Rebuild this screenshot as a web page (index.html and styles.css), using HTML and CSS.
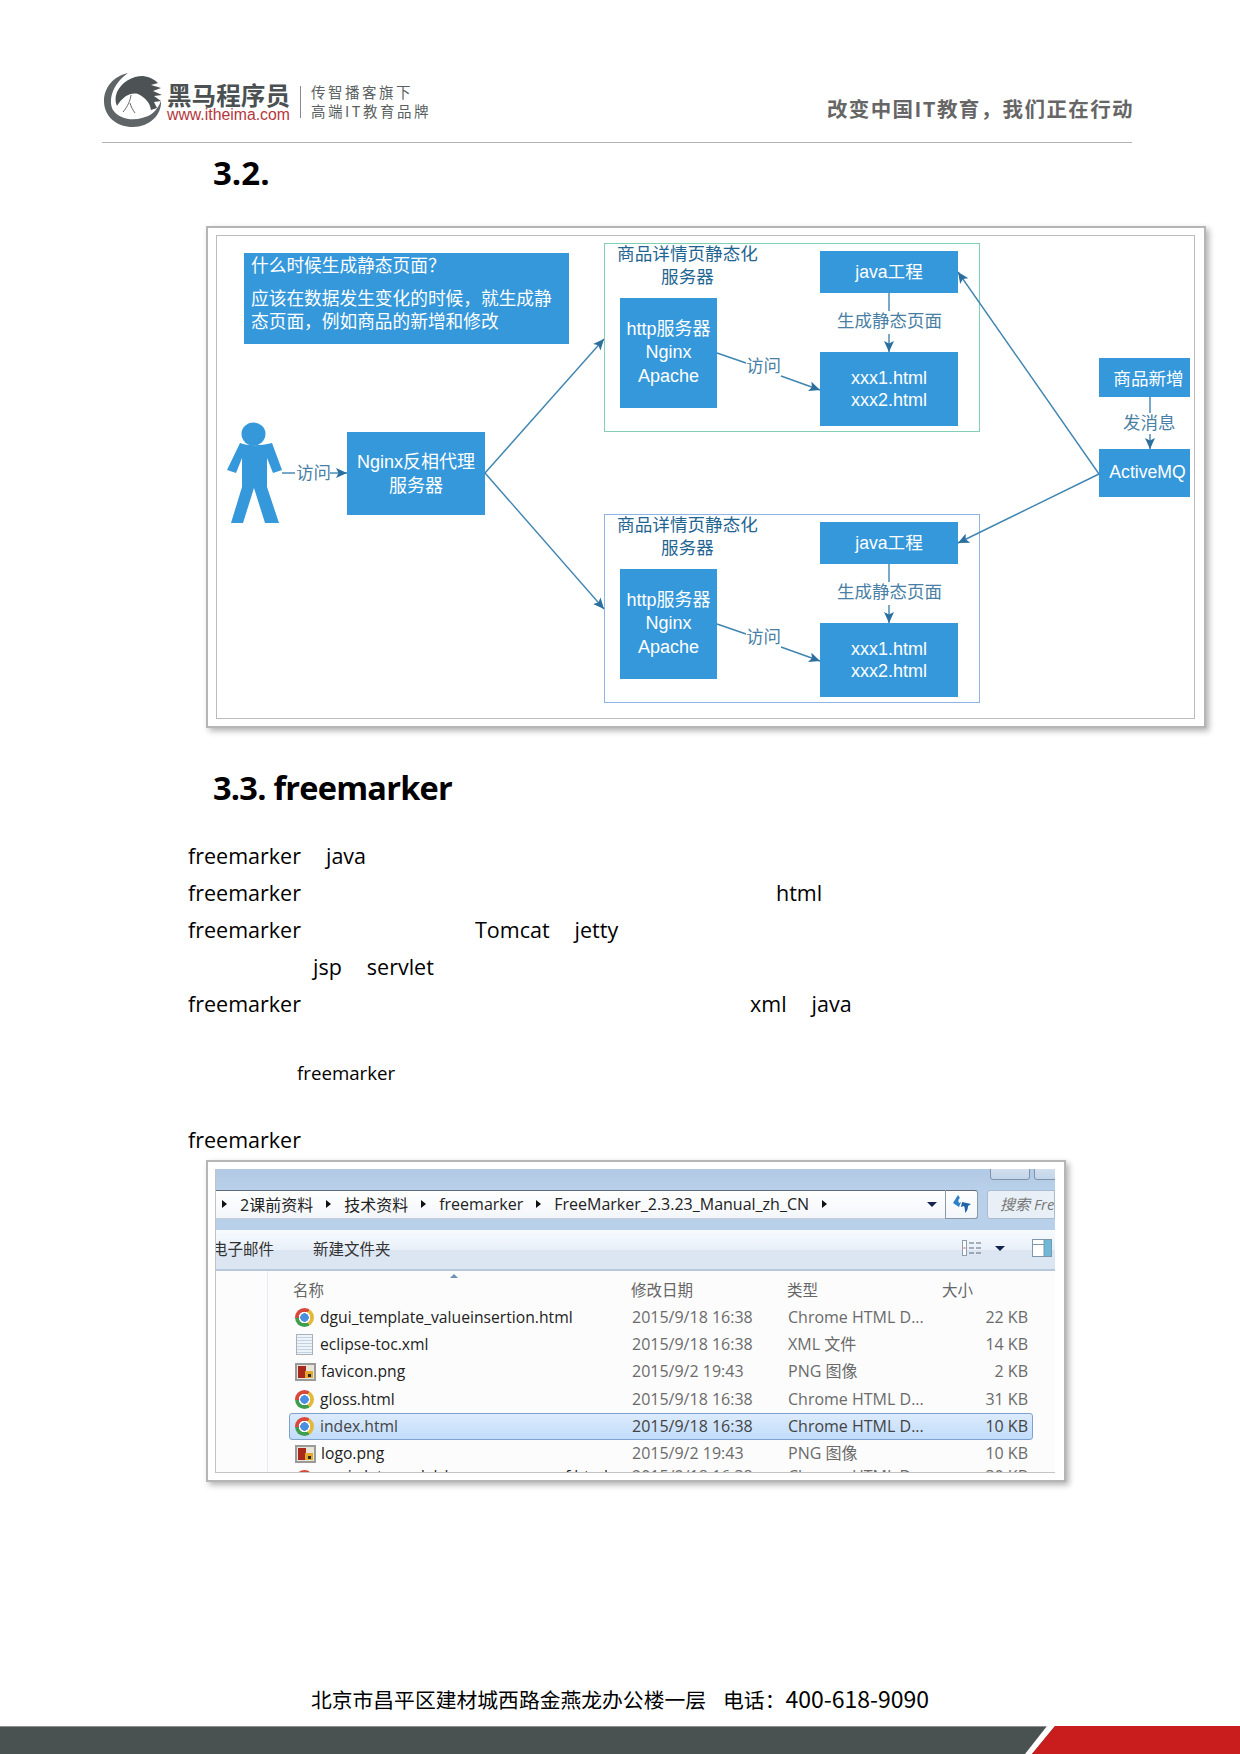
FILE: index.html
```html
<!DOCTYPE html>
<html lang="zh-CN">
<head>
    <meta charset="UTF-8">
    <title>freemarker</title>
    <link rel="stylesheet" href="styles.css">
</head>
<body>
    <header class="page-head">
        <svg class="logo" width="60" height="56" viewBox="0 0 60 56">
            <path fill="#5f6566" d="M24 0C10 3 0 14 0 28C0 44 13 54 29 54C45 54 58 42 57 28C53 38 47 43 38 45C28 48 15 46 9 37C4 28 8 11 24 0Z"/>
            <path fill="#4d5354" d="M13 19C18 9 28 3 39 3C46 4 51 7 54 10L47 12L57 15L49 18L58 22L50 23L57 28L50 29L53 35L47 37C46 30 42 25 34 21C27 19 19 23 13 33C11 29 11 24 13 19Z"/>
            <path fill="none" stroke="#666" stroke-width="1" d="M27 22C26 28 24 33 19 39M26 30C27 34 29 37 31 40"/>
        </svg>
        <div class="brand">
            <div class="brand-name">黑马程序员</div>
            <div class="brand-url">www.itheima.com</div>
        </div>
        <div class="brand-rule"></div>
        <div class="brand-slogan">
            <div>传智播客旗下</div>
            <div>高端IT教育品牌</div>
        </div>
        <div class="head-motto">改变中国IT教育，我们正在行动</div>
    </header>

    <main>
        <h2 class="heading first">3.2.</h2>

        <div class="shot diagram">
            <div class="canvas">
                <div class="box note">
                    <p>什么时候生成静态页面？</p>
                    <p>应该在数据发生变化的时候，就生成静<br>态页面，例如商品的新增和修改</p>
                </div>
                <div class="box node nginx">Nginx反相代理<br>服务器</div>

                <div class="group group-green">
                    <div class="group-title">商品详情页静态化<br>服务器</div>
                    <div class="box node http">http服务器<br>Nginx<br>Apache</div>
                    <div class="box node java">java工程</div>
                    <div class="box node xxx">xxx1.html<br>xxx2.html</div>
                    <div class="edge-label gen">生成静态页面</div>
                    <div class="edge-label visit">访问</div>
                    <svg class="group-lines" width="376" height="189" viewBox="604 243 376 189">
                        <path class="line" d="M717 353L746 363"/>
                        <path class="line" marker-end="url(#arrow)" d="M781 376L820 390"/>
                        <path class="line" d="M889 293V311"/>
                        <path class="line" marker-end="url(#arrow)" d="M889 334V352"/>
                    </svg>
                </div>

                <div class="group group-blue">
                    <div class="group-title">商品详情页静态化<br>服务器</div>
                    <div class="box node http">http服务器<br>Nginx<br>Apache</div>
                    <div class="box node java">java工程</div>
                    <div class="box node xxx">xxx1.html<br>xxx2.html</div>
                    <div class="edge-label gen">生成静态页面</div>
                    <div class="edge-label visit">访问</div>
                    <svg class="group-lines" width="376" height="189" viewBox="604 243 376 189">
                        <path class="line" d="M717 353L746 363"/>
                        <path class="line" marker-end="url(#arrow)" d="M781 376L820 390"/>
                        <path class="line" d="M889 293V311"/>
                        <path class="line" marker-end="url(#arrow)" d="M889 334V352"/>
                    </svg>
                </div>

                <div class="box node goods">商品新增</div>
                <div class="box node mq">ActiveMQ</div>
                <div class="edge-label send">发消息</div>
                <div class="edge-label visit-out">访问</div>

                <svg class="main-lines" width="977" height="481" viewBox="217 236 977 481">
                    <defs>
                        <marker id="arrow" markerUnits="userSpaceOnUse" markerWidth="12" markerHeight="10" refX="11" refY="5" orient="auto">
                            <path d="M0 0L11 5L0 10L2.5 5Z" fill="#2a6f9e"/>
                        </marker>
                    </defs>
                    <ellipse cx="253.5" cy="434" rx="12" ry="11.5" fill="#3598db"/>
                    <path fill="#3598db" d="M240 443C248 446 260 446 272 443L282 470L273 473L267 458V487L279 523H265L254 488L243 523H231L242 487V458L236 473L227 470Z"/>
                    <path class="line" d="M282 473H295"/>
                    <path class="line" marker-end="url(#arrow)" d="M330 473H347"/>
                    <path class="line" marker-end="url(#arrow)" d="M485 473L604 339"/>
                    <path class="line" marker-end="url(#arrow)" d="M485 473L604 609"/>
                    <path class="line" marker-end="url(#arrow)" d="M1099 474L958 272"/>
                    <path class="line" marker-end="url(#arrow)" d="M1099 474L958 543"/>
                    <path class="line" d="M1150 397V413"/>
                    <path class="line" marker-end="url(#arrow)" d="M1150 434V449"/>
                </svg>
            </div>
        </div>

        <h2 class="heading second">3.3. freemarker</h2>

        <div class="doc-text">
            <div class="doc-row"><span>freemarker</span><span class="to-java">java</span></div>
            <div class="doc-row"><span>freemarker</span><span class="to-html">html</span></div>
            <div class="doc-row"><span>freemarker</span><span class="to-tomcat">Tomcat</span><span class="to-jetty">jetty</span></div>
            <div class="doc-row"><span class="to-jsp">jsp</span><span class="to-servlet">servlet</span></div>
            <div class="doc-row"><span>freemarker</span><span class="to-xml">xml</span><span class="to-java2">java</span></div>
            <div class="doc-row small"><span class="to-small">freemarker</span></div>
            <div class="doc-row last"><span>freemarker</span></div>
        </div>

        <div class="shot explorer">
            <div class="window">
                <div class="win-top">
                    <span class="win-btn btn-max"></span>
                    <span class="win-btn btn-close"></span>
                </div>
                <div class="win-address">
                    <div class="crumbs">
                        <i class="tri"></i><span>2课前资料</span>
                        <i class="tri"></i><span>技术资料</span>
                        <i class="tri"></i><span>freemarker</span>
                        <i class="tri"></i><span>FreeMarker_2.3.23_Manual_zh_CN</span>
                        <i class="tri"></i>
                        <i class="drop"></i>
                    </div>
                    <div class="refresh">
                        <svg width="20" height="20" viewBox="0 0 20 20">
                            <path fill="#2f7fc8" d="M1 9L6 1L8 4C6 5 6 7 7 9L9 8L7 13Z"/>
                            <path fill="#1f63a8" d="M10 8L19 10L16 12C16 15 15 17 13 19C13 16 13 14 12 12L9 13Z"/>
                        </svg>
                    </div>
                    <div class="search">搜索 Fre</div>
                </div>
                <div class="win-band"></div>
                <div class="win-tools">
                    <span class="tool-mail">电子邮件</span>
                    <span class="tool-new">新建文件夹</span>
                    <svg class="tool-view" width="20" height="16" viewBox="0 0 20 16">
                        <rect x="0.5" y="0.5" width="4" height="15" fill="#fff" stroke="#8f9cab"/>
                        <path stroke="#5f6a77" stroke-width="1" d="M7 3h5M14 3h5M7 8h5M14 8h5M7 13h5M14 13h5"/>
                        <path stroke="#c0392b" stroke-width="1" d="M1.5 8h2"/>
                    </svg>
                    <i class="drop"></i>
                    <svg class="tool-pane" width="20" height="18" viewBox="0 0 20 18">
                        <rect x="0.5" y="0.5" width="19" height="17" fill="#fff" stroke="#7f96ad"/>
                        <rect x="12" y="1" width="7" height="16" fill="#6fb9d8"/>
                        <path stroke="#7f96ad" d="M1 5.5h11M12 1v16"/>
                    </svg>
                </div>
                <div class="win-body">
                    <div class="nav-pane"></div>
                    <div class="files">
                        <div class="file-head">
                            <span class="sort"></span>
                            <span class="col-name">名称</span>
                            <span>修改日期</span>
                            <span>类型</span>
                            <span class="col-size">大小</span>
                        </div>
                        <div class="file-row">
                            <span class="file-name"><i class="ico-chrome"></i>dgui_template_valueinsertion.html</span>
                            <span>2015/9/18 16:38</span><span>Chrome HTML D...</span><span class="file-size">22 KB</span>
                        </div>
                        <div class="file-row">
                            <span class="file-name"><i class="ico-doc"></i>eclipse-toc.xml</span>
                            <span>2015/9/18 16:38</span><span>XML 文件</span><span class="file-size">14 KB</span>
                        </div>
                        <div class="file-row">
                            <span class="file-name"><i class="ico-png"></i>favicon.png</span>
                            <span>2015/9/2 19:43</span><span>PNG 图像</span><span class="file-size">2 KB</span>
                        </div>
                        <div class="file-row">
                            <span class="file-name"><i class="ico-chrome"></i>gloss.html</span>
                            <span>2015/9/18 16:38</span><span>Chrome HTML D...</span><span class="file-size">31 KB</span>
                        </div>
                        <div class="file-row selected">
                            <span class="file-name"><i class="ico-chrome"></i>index.html</span>
                            <span>2015/9/18 16:38</span><span>Chrome HTML D...</span><span class="file-size">10 KB</span>
                        </div>
                        <div class="file-row">
                            <span class="file-name"><i class="ico-png"></i>logo.png</span>
                            <span>2015/9/2 19:43</span><span>PNG 图像</span><span class="file-size">10 KB</span>
                        </div>
                        <div class="file-row cut">
                            <span class="file-name"><i class="ico-chrome"></i>pgui_datamodel_beanwrapper_ref.html</span>
                            <span>2015/9/18 16:38</span><span>Chrome HTML D...</span><span class="file-size">30 KB</span>
                        </div>
                    </div>
                </div>
            </div>
        </div>
    </main>

    <footer class="page-foot">
        <div class="address">北京市昌平区建材城西路金燕龙办公楼一层&nbsp;&nbsp;&nbsp;电话：<span class="tel">400-618-9090</span></div>
        <div class="foot-bar"></div>
    </footer>
</body>
</html>
```
FILE: styles.css
```css
* {
    box-sizing: border-box;
}

body {
    margin: 0;
    height: 1754px;
    display: flex;
    flex-direction: column;
    background: #fff;
    color: #000;
    font-family: "Open Sans", "Noto Sans CJK SC", sans-serif;
    overflow: hidden;
}

/* page header */
.page-head {
    margin: 0 108px 0 102px;
    height: 143px;
    padding: 73px 0 0 2px;
    display: flex;
    align-items: flex-start;
    border-bottom: 1px solid #b2b2b2;
    flex-shrink: 0;
}

.brand {
    margin: 8px 9px 0 3px;
    width: 124px;
}

.brand-name {
    font: bold 24.6px/26px "Noto Sans CJK SC", sans-serif;
    color: #4b5152;
    white-space: nowrap;
}

.brand-url {
    font: 15.8px/16px "Liberation Sans", sans-serif;
    color: #b5363c;
    white-space: nowrap;
}

.brand-rule {
    width: 1px;
    height: 32px;
    margin-top: 13px;
    background: #8a8a8a;
}

.brand-slogan {
    margin: 9px 0 0 10px;
    font: 14.5px/19px "Noto Sans CJK SC", sans-serif;
    letter-spacing: 2.5px;
    color: #5a5f60;
    white-space: nowrap;
}

.head-motto {
    margin: 22px -2px 0 auto;
    font: bold 20.5px/26px "Noto Sans CJK SC", sans-serif;
    letter-spacing: 1.4px;
    color: #666;
    white-space: nowrap;
}

/* headings */
.heading {
    margin: 0 0 0 213px;
    height: 40px;
    font-size: 33px;
    line-height: 40px;
    font-weight: 700;
}

.heading.first {
    margin-top: 10px;
}

.heading.second {
    margin-top: 40px;
    font-size: 32.5px;
    letter-spacing: -0.75px;
}

/* framed pictures */
.shot {
    margin-left: 206px;
    border: 2px solid #b5b5b5;
    box-shadow: 3px 3px 6px rgba(0, 0, 0, 0.3);
    background: #fff;
}

.diagram {
    margin-top: 33px;
    width: 1000px;
    height: 502px;
    padding: 7px 9px 7px 8px;
}

.canvas {
    position: relative;
    width: 100%;
    height: 100%;
    border: 1px solid #bcbcbc;
    font-family: "Liberation Sans", "Noto Sans CJK SC", sans-serif;
    font-size: 18px;
}

.box {
    position: absolute;
    background: #3598db;
    color: #fff;
}

.node {
    display: flex;
    align-items: center;
    justify-content: center;
    text-align: center;
    line-height: 23.5px;
}

.note {
    left: 27px;
    top: 17px;
    width: 325px;
    height: 91px;
    padding: 2px 7px 0;
    font-size: 17.7px;
    line-height: 23px;
}

.note p {
    margin: 0 0 10px;
    white-space: nowrap;
}

.nginx {
    left: 130px;
    top: 196px;
    width: 138px;
    height: 83px;
    line-height: 24px;
}

.group {
    position: absolute;
    left: 387px;
    width: 376px;
    height: 189px;
    border: 1px solid;
}

.group-green {
    top: 7px;
    border-color: #82d0b4;
}

.group-blue {
    top: 278px;
    border-color: #8db5e6;
}

.group-title {
    position: absolute;
    left: 12px;
    top: -1px;
    width: 141px;
    text-align: center;
    color: #1f6592;
    font-size: 17.6px;
    line-height: 22.5px;
    white-space: nowrap;
}

.http {
    left: 15px;
    top: 54px;
    width: 97px;
    height: 110px;
    white-space: nowrap;
}

.java {
    left: 215px;
    top: 7px;
    width: 138px;
    height: 42px;
    padding-top: 2px;
    font-size: 17.6px;
}

.xxx {
    left: 215px;
    top: 108px;
    width: 138px;
    height: 74px;
    line-height: 22px;
}

.goods {
    left: 882px;
    top: 122px;
    width: 91px;
    height: 39px;
    padding: 5px 0 0 8px;
    font-size: 17.6px;
}

.mq {
    left: 882px;
    top: 213px;
    width: 91px;
    height: 48px;
    padding-left: 6px;
    font-size: 17.6px;
}

.edge-label {
    position: absolute;
    color: #4a7fa5;
    font-size: 17.5px;
    line-height: 20px;
    white-space: nowrap;
}

.gen {
    left: 232px;
    top: 67px;
}

.visit {
    left: 141px;
    top: 112px;
}

.send {
    left: 906px;
    top: 177px;
}

.visit-out {
    left: 79px;
    top: 227px;
}

.group-lines,
.main-lines {
    position: absolute;
    overflow: visible;
    pointer-events: none;
}

.group-lines {
    left: -1px;
    top: -1px;
}

.main-lines {
    left: 0;
    top: 0;
}

.line {
    fill: none;
    stroke: #3f85b0;
    stroke-width: 1.4;
}

/* document text, the gaps are where the text of the page has dropped out */
.doc-text {
    margin: 30px 0 0 188px;
}

.doc-row {
    display: flex;
    height: 36.9px;
    font-size: 21.5px;
    line-height: 36.9px;
}

.doc-row.small {
    margin-top: 33px;
    font-size: 18.7px;
}

.doc-row.last {
    margin-top: 30px;
}

.to-java { margin-left: 25px; }
.to-html { margin-left: 475px; }
.to-tomcat { margin-left: 174px; }
.to-jetty { margin-left: 25px; }
.to-jsp { margin-left: 125px; }
.to-servlet { margin-left: 25px; }
.to-xml { margin-left: 449px; }
.to-java2 { margin-left: 25px; }
.to-small { margin-left: 109px; }

/* explorer screenshot */
.explorer {
    margin-top: 0.4px;
    width: 860px;
    height: 322px;
    padding: 7px 9px 7px 7px;
}

.window {
    position: relative;
    height: 100%;
    display: flex;
    flex-direction: column;
    overflow: hidden;
    border-bottom: 1px solid #c4c4c4;
    border-left: 1px solid #c4c4c4;
    font-family: "Open Sans", "Noto Sans CJK SC", sans-serif;
    font-size: 16px;
    color: #222;
}

.win-top {
    height: 21px;
    background: linear-gradient(#b1c9e4, #b9d0ea);
    flex-shrink: 0;
}

.win-btn {
    position: absolute;
    top: -8px;
    height: 19px;
    border: 1px solid #7f93a8;
    border-radius: 0 0 3px 3px;
    background: linear-gradient(#dce7f3, #c3d5e9);
}

.btn-max {
    left: 774px;
    width: 40px;
}

.btn-close {
    left: 818px;
    width: 30px;
}

.win-address {
    height: 29px;
    display: flex;
    background: #b9d0ea;
    flex-shrink: 0;
}

.crumbs {
    width: 729px;
    display: flex;
    align-items: center;
    gap: 13px;
    padding-left: 6px;
    background: linear-gradient(#fff, #f3f6fa);
    border-top: 1px solid #5e6a75;
    border-bottom: 1px solid #c5ced8;
    white-space: nowrap;
}

.tri {
    width: 0;
    height: 0;
    flex-shrink: 0;
    border-left: 5px solid #111;
    border-top: 4.5px solid transparent;
    border-bottom: 4.5px solid transparent;
}

.drop {
    width: 0;
    height: 0;
    flex-shrink: 0;
    border-top: 5px solid #14234f;
    border-left: 5px solid transparent;
    border-right: 5px solid transparent;
}

.crumbs .drop {
    margin-left: auto;
    margin-right: 8px;
}

.refresh {
    width: 33px;
    display: flex;
    align-items: center;
    justify-content: center;
    background: linear-gradient(#fff, #f3f6fa);
    border: 1px solid #8b98a6;
    border-top-color: #5e6a75;
    border-radius: 0 3px 3px 0;
}

.search {
    margin-left: 9px;
    flex: 1;
    padding-left: 12px;
    background: #e9eff6;
    border: 1px solid #a9bbcf;
    border-radius: 3px 0 0 3px;
    font-style: italic;
    font-size: 15px;
    line-height: 27px;
    color: #777;
    white-space: nowrap;
    overflow: hidden;
}

.win-band {
    height: 11px;
    background: #b9d0ea;
    flex-shrink: 0;
}

.win-tools {
    height: 41px;
    padding-bottom: 2px;
    display: flex;
    align-items: center;
    flex-shrink: 0;
    background: linear-gradient(#f7fbff, #e9f0f9 50%, #dce6f3 51%, #dce6f3);
    border-bottom: 2px solid #b7c8dc;
    color: #333;
    font-size: 15.5px;
    white-space: nowrap;
}

.tool-mail {
    width: 58px;
    margin-right: 39px;
    direction: rtl;
    overflow: hidden;
}

.tool-view {
    margin-left: auto;
}

.win-tools .drop {
    margin: 0 27px 0 13px;
}

.tool-pane {
    margin-right: 3px;
}

.win-body {
    flex: 1;
    display: flex;
    min-height: 0;
    background: #fcfcfc;
}

.nav-pane {
    width: 52px;
    border-right: 1px solid #e4ebf3;
    flex-shrink: 0;
}

.files {
    position: relative;
    padding-left: 21px;
}

.file-head,
.file-row {
    display: grid;
    grid-template-columns: 342px 156px 163px 77px;
    width: 744px;
    height: 27.3px;
    line-height: 25.3px;
    padding-right: 6px;
    white-space: nowrap;
    color: #6b6b6b;
}

.file-head {
    height: 33px;
    line-height: 38px;
    font-size: 15.5px;
    color: #666;
}

.col-name {
    padding-left: 4px;
}

.col-size {
    margin-left: -8px;
}

.sort {
    position: absolute;
    left: 182px;
    top: 3px;
    border-bottom: 4px solid #6d8fb3;
    border-left: 4px solid transparent;
    border-right: 4px solid transparent;
}

.file-row {
    border: 1px solid transparent;
    border-radius: 3px;
}

/* last row is cut by the bottom of the window, only the tops of its text show */
.file-row.cut {
    margin-top: -1px;
    line-height: 19px;
}

.cut .file-name {
    align-items: flex-start;
}

.cut .ico-chrome {
    margin-top: 3px;
}

.file-name {
    display: flex;
    align-items: center;
    gap: 6px;
    padding-left: 5px;
    font-size: 15.7px;
    color: #222;
}

.file-size {
    text-align: right;
}

.selected {
    background: linear-gradient(#dcebfc, #c1dcfb);
    border-color: #7da2ce;
}

.selected span {
    color: #444;
}

.ico-chrome {
    width: 19px;
    height: 19px;
    border-radius: 50%;
    flex-shrink: 0;
    background:
        radial-gradient(circle, #4a8fe0 0 4px, #fff 4.5px 5.5px, transparent 6px),
        conic-gradient(from 30deg, #e2b93b 0 120deg, #3f9e4d 120deg 240deg, #d9483b 240deg 360deg);
}

.ico-doc {
    width: 17px;
    height: 21px;
    margin: 0 1px;
    flex-shrink: 0;
    border: 1px solid #aab0b8;
    background: repeating-linear-gradient(#eef3f8 0 2px, #c3d2e2 2px 3px);
}

.ico-png {
    width: 21px;
    height: 18px;
    margin-right: -1px;
    flex-shrink: 0;
    border: 2px solid #9a9a9a;
    background:
        linear-gradient(#2b2b2b, #2b2b2b) 11px 9px / 3px 3px no-repeat,
        linear-gradient(#e3a92c, #e3a92c) 8px 6px / 8px 7px no-repeat,
        linear-gradient(#a8281c, #a8281c) 1px 1px / 8px 12px no-repeat,
        #e8e4d8;
}

/* page footer */
.page-foot {
    margin-top: auto;
    flex-shrink: 0;
}

.address {
    height: 46px;
    text-align: center;
    font: 20.8px/36px "Noto Sans CJK SC", sans-serif;
    word-spacing: 1px;
}

.tel {
    font-size: 23px;
}

.foot-bar {
    position: relative;
    height: 28px;
    background: #4a5151;
    border-top: 1px solid #8c9191;
}

.foot-bar::after {
    content: "";
    position: absolute;
    top: -1px;
    bottom: 0;
    right: 0;
    width: 208px;
    background: #c91c1c;
    clip-path: polygon(23px 0, 100% 0, 100% 100%, 0 100%);
}

.foot-bar::before {
    content: "";
    position: absolute;
    top: -1px;
    bottom: 0;
    right: 0;
    width: 216px;
    background: #fff;
    clip-path: polygon(23px 0, 31px 0, 8px 100%, 1px 100%);
}
```
